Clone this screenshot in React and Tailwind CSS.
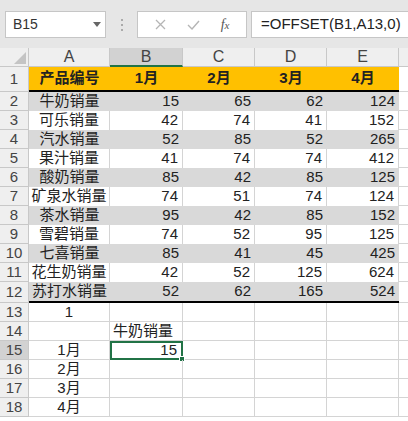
const COLS = [
  { key: 'A', w: 'w-[81px]' },
  { key: 'B', w: 'w-[73px]' },
  { key: 'C', w: 'w-[72px]' },
  { key: 'D', w: 'w-[72px]' },
  { key: 'E', w: 'w-[72px]' },
];

const DATA = [
  ['牛奶销量', 15, 65, 62, 124],
  ['可乐销量', 42, 74, 41, 152],
  ['汽水销量', 52, 85, 52, 265],
  ['果汁销量', 41, 74, 74, 412],
  ['酸奶销量', 85, 42, 85, 125],
  ['矿泉水销量', 74, 51, 74, 124],
  ['茶水销量', 95, 42, 85, 152],
  ['雪碧销量', 74, 52, 95, 125],
  ['七喜销量', 85, 41, 45, 425],
  ['花生奶销量', 42, 52, 125, 624],
  ['苏打水销量', 52, 62, 165, 524],
];

const FONT = { fontFamily: '"Liberation Sans", "Noto Sans CJK SC", sans-serif' };

const RowNum = ({ n, h, active }) => (
  <div
    className={`w-[29px] shrink-0 ${h} flex items-center justify-center border-r border-b border-[#c8c8c8] text-[15px] text-[#444] ${
      active ? 'bg-[#d2d2d2]' : 'bg-[#efefef]'
    }`}
  >
    {n}
  </div>
);

const App = () => {
  return (
    <div className="w-[408px] h-[421px] overflow-hidden bg-white text-[#222]" style={FONT}>
      {/* formula bar */}
      <div className="h-[48px] bg-[#e6e6e6] flex items-start pt-[11px]">
        <div className="ml-[5px] w-[101px] h-[27px] bg-white border border-[#c6c6c6] flex items-center pl-[7px] pr-[4px] text-[14px] text-[#333]">
          <span className="flex-1">B15</span>
          <svg width="8" height="5" viewBox="0 0 8 5"><path d="M0 0h8L4 5z" fill="#666" /></svg>
        </div>
        <div className="w-[31px] h-[27px] flex flex-col items-center justify-center gap-[3px]">
          <span className="w-[2px] h-[2px] bg-[#aaa]" />
          <span className="w-[2px] h-[2px] bg-[#aaa]" />
          <span className="w-[2px] h-[2px] bg-[#aaa]" />
        </div>
        <div className="w-[110px] h-[27px] bg-white border border-[#c6c6c6] flex items-center justify-around px-[6px]">
          <svg width="11" height="11" viewBox="0 0 11 11"><path d="M1 1l9 9M10 1l-9 9" stroke="#b5b5b5" strokeWidth="1.3" /></svg>
          <svg width="13" height="10" viewBox="0 0 13 10"><path d="M1 5l4 4 7-8" stroke="#b5b5b5" strokeWidth="1.4" fill="none" /></svg>
          <span className="italic text-[14px] text-[#555]" style={{ fontFamily: '"Liberation Serif", serif' }}>
            f<span className="text-[11px]">x</span>
          </span>
        </div>
        <div className="ml-[4px] flex-1 h-[27px] bg-white border border-[#c6c6c6] border-r-0 flex items-center pl-[9px] text-[15px] text-[#222]">
          =OFFSET(B1,A13,0)
        </div>
      </div>

      {/* column headers */}
      <div className="flex h-[19px]">
        <div className="w-[29px] shrink-0 bg-[#efefef] border-r border-b border-[#c8c8c8] relative">
          <svg className="absolute right-[2px] bottom-[2px]" width="12" height="12" viewBox="0 0 12 12"><path d="M12 0v12H0z" fill="#c4c4c4" /></svg>
        </div>
        {COLS.map((c) => (
          <div
            key={c.key}
            className={`${c.w} shrink-0 flex items-center justify-center text-[16px] text-[#444] border-r border-[#c8c8c8] ${
              c.key === 'B' ? 'bg-[#d2d2d2] border-b-2 border-b-[#217346]' : 'bg-[#efefef] border-b'
            }`}
          >
            {c.key}
          </div>
        ))}
        <div className="flex-1 bg-[#efefef] border-b border-[#c8c8c8]" />
      </div>

      {/* row 1 */}
      <div className="flex h-[25px]">
        <RowNum n={1} h="h-[25px]" />
        <div className="flex h-[25px] bg-[#ffc000] border-b-2 border-black font-bold text-[15px] text-[#222]">
          <div className="w-[81px] flex items-center justify-center">产品编号</div>
          <div className="w-[73px] flex items-center justify-center">1月</div>
          <div className="w-[72px] flex items-center justify-center">2月</div>
          <div className="w-[72px] flex items-center justify-center">3月</div>
          <div className="w-[72px] flex items-center justify-center">4月</div>
        </div>
        <div className="flex-1 border-b border-[#d4d4d4]" />
      </div>

      {/* rows 2-12 */}
      {DATA.map((r, i) => {
        const gray = i % 2 === 0;
        const last = i === DATA.length - 1;
        return (
          <div key={i} className={`flex ${last ? 'h-[21px]' : 'h-[19px]'}`}>
            <RowNum n={i + 2} h={last ? 'h-[21px]' : 'h-[19px]'} />
            <div
              className={`flex text-[15px] ${gray ? 'bg-[#d9d9d9]' : 'bg-white'} ${
                last ? 'border-b-2 border-black' : ''
              }`}
            >
              <div className={`w-[81px] h-[19px] flex items-center justify-center ${gray ? '' : 'border-r border-[#d4d4d4]'}`}>
                {r[0]}
              </div>
              {r.slice(1).map((v, j) => (
                <div
                  key={j}
                  className={`${j === 0 ? 'w-[73px]' : 'w-[72px]'} h-[19px] flex items-center justify-end pr-[4px] ${
                    gray ? '' : 'border-r border-[#d4d4d4]'
                  }`}
                >
                  {v}
                </div>
              ))}
            </div>
            <div className="flex-1 border-b border-[#d4d4d4]" />
          </div>
        );
      })}

      {/* rows 13-18 */}
      {[
        [13, '1', '', false],
        [14, '', '牛奶销量', false],
        [15, '1月', '15', true],
        [16, '2月', '', false],
        [17, '3月', '', false],
        [18, '4月', '', false],
      ].map(([n, a, b, sel]) => (
        <div key={n} className="flex h-[19px] text-[15px]">
          <RowNum n={n} h="h-[19px]" active={sel} />
          <div className="w-[81px] shrink-0 flex items-center justify-center border-r border-b border-[#d4d4d4]">{a}</div>
          <div
            className={`w-[73px] shrink-0 flex items-center relative ${
              sel
                ? 'justify-end pr-[4px] border-2 border-[#217346]'
                : 'justify-start pl-[3px] border-r border-b border-[#d4d4d4]'
            }`}
          >
            {b}
            {sel && <span className="absolute right-[-4px] bottom-[-4px] w-[6px] h-[6px] bg-[#217346] border border-white" />}
          </div>
          <div className="w-[72px] shrink-0 border-r border-b border-[#d4d4d4]" />
          <div className="w-[72px] shrink-0 border-r border-b border-[#d4d4d4]" />
          <div className="w-[72px] shrink-0 border-r border-b border-[#d4d4d4]" />
          <div className="flex-1 border-b border-[#d4d4d4]" />
        </div>
      ))}
    </div>
  );
};

export default App;
